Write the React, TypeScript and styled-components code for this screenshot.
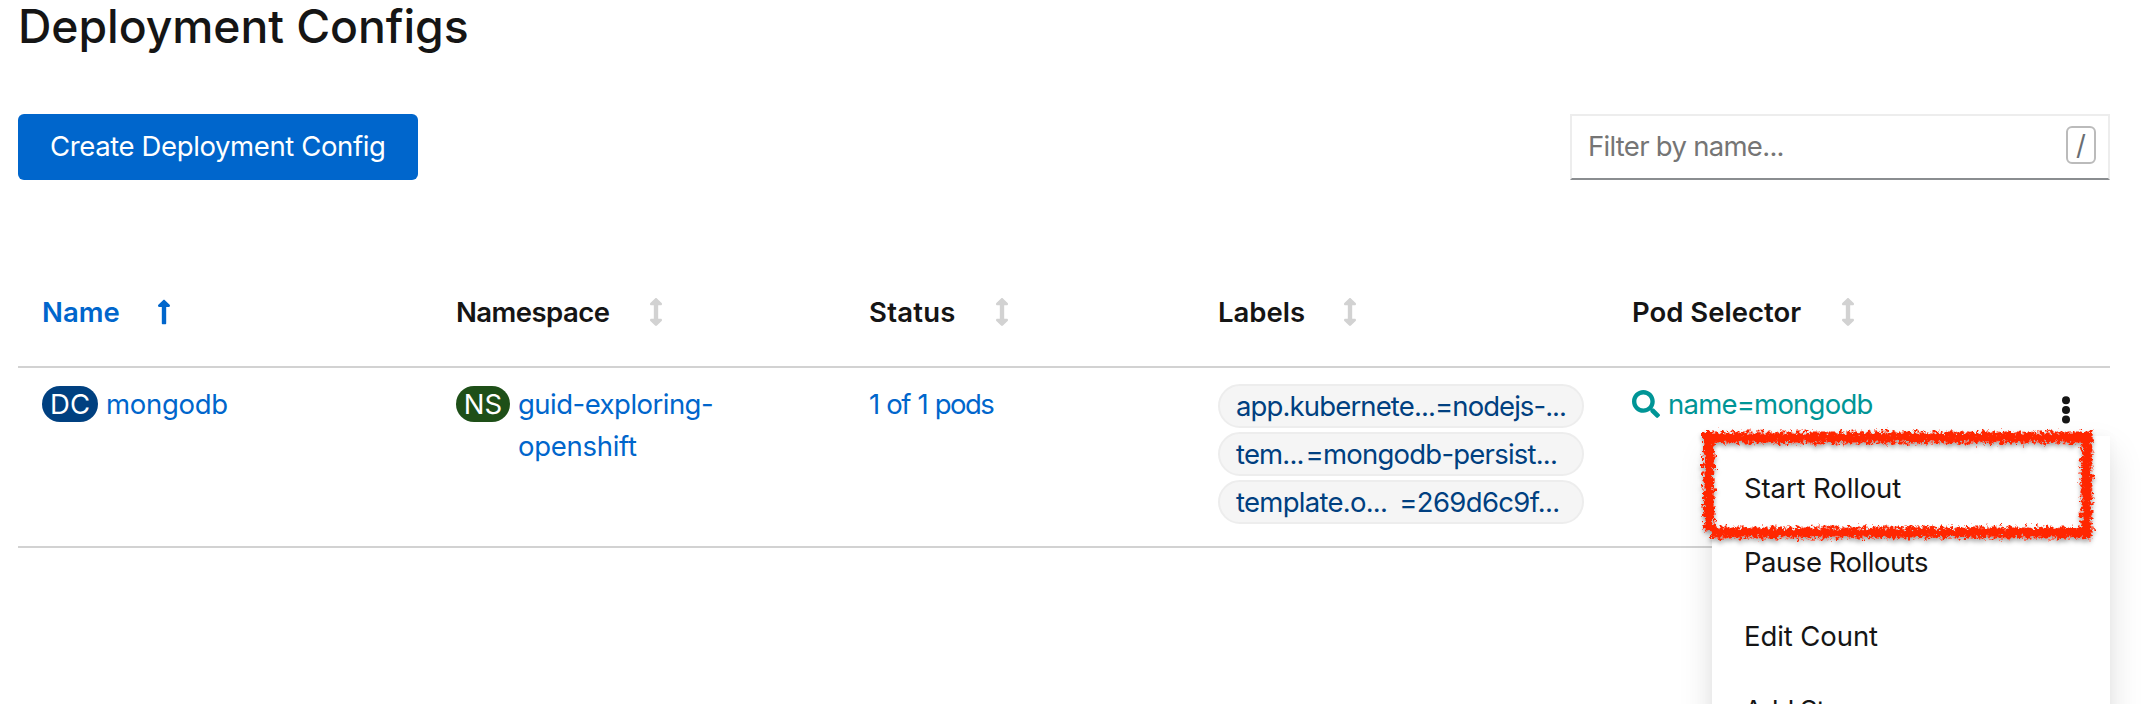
import React from "react";
import styled, { createGlobalStyle } from "styled-components";
import { FaArrowsAltV, FaLongArrowAltUp, FaSearch } from "react-icons/fa";

const GlobalStyle = createGlobalStyle`
  * { box-sizing: border-box; }
  body {
    margin: 0;
    background: #fff;
    color: #151515;
    font-family: Inter, "Liberation Sans", sans-serif;
    font-size: 27.5px;
    overflow: hidden;
  }
`;

const Page = styled.main`
  width: 2150px;
  height: 704px;
  padding: 0 40px 0 18px;
  overflow: hidden;
`;

const Title = styled.h1`
  margin: 0;
  height: 114px;
  font-size: 46.3px;
  font-weight: 500;
  line-height: 53px;
  letter-spacing: -0.06px;
`;

const Toolbar = styled.div`
  display: flex;
  justify-content: space-between;
  height: 66px;
`;

const Text = styled.span<{ $track?: number; $word?: number }>`
  letter-spacing: ${(p) => p.$track ?? 0}px;
  word-spacing: ${(p) => p.$word ?? 0}px;
  white-space: nowrap;
`;

const PrimaryButton = styled.button`
  width: 400px;
  height: 66px;
  padding: 0 0 2px 32px;
  border: 0;
  border-radius: 6px;
  background: #06c;
  color: #fff;
  font: inherit;
  text-align: left;
`;

const FilterBox = styled.div`
  display: flex;
  align-items: center;
  justify-content: space-between;
  width: 540px;
  height: 66px;
  padding: 0 12px 2px 16px;
  border: 2px solid #ededed;
  border-bottom-color: #8a8d90;
  color: #757575;
`;

const KeyHint = styled.kbd`
  display: flex;
  align-items: center;
  justify-content: center;
  width: 30px;
  height: 38px;
  margin-bottom: 2px;
  border: 2px solid #bbb;
  border-radius: 6px;
  color: #6a6e73;
  font: inherit;
`;

const Table = styled.div`
  position: relative;
  margin-top: 64px;
`;

const Row = styled.div`
  display: grid;
  grid-template-columns: 414px 413px 349px 414px 1fr;
  border-bottom: 2px solid #d2d2d2;
`;

const HeadRow = styled(Row)`
  height: 124px;
  padding-top: 47px;
`;

const BodyRow = styled(Row)`
  height: 180px;
`;

const HeadCell = styled.div<{ $active?: boolean; $gap: number }>`
  display: flex;
  align-items: center;
  gap: ${(p) => p.$gap}px;
  height: 42px;
  padding-left: 24px;
  color: ${(p) => (p.$active ? "#06c" : "#151515")};
  font-weight: 600;

  svg {
    width: 14px;
    height: 28px;
    color: ${(p) => (p.$active ? "#06c" : "#d2d2d2")};
  }
`;

const Cell = styled.div`
  display: flex;
  align-items: flex-start;
  padding: 15px 0 0 24px;
  line-height: 42px;
`;

const Badge = styled.span<{ $color: string; $width: number }>`
  flex: none;
  width: ${(p) => p.$width}px;
  height: 36px;
  margin: 3px 8px 0 0;
  border-radius: 18px;
  background: ${(p) => p.$color};
  color: #fff;
  line-height: 36px;
  text-align: center;
`;

const Link = styled.a`
  display: flex;
  flex-direction: column;
  color: #06c;
`;

const Labels = styled.div`
  display: flex;
  flex-direction: column;
  gap: 4px;
  padding: 16px 0 0 24px;
`;

const Label = styled.a<{ $gap: number }>`
  display: flex;
  gap: ${(p) => p.$gap}px;
  width: 366px;
  height: 44px;
  padding-left: 16px;
  border: 2px solid #ededed;
  border-radius: 22px;
  background: #f5f5f5;
  color: #004080;
  line-height: 40px;
`;

const SelectorCell = styled(Cell)`
  gap: 8px;
  color: #009596;

  > svg {
    width: 28px;
    height: 28px;
    margin-top: 7px;
  }
`;

const Kebab = styled.button`
  width: 8px;
  height: 28px;
  margin: 13px 40px 0 auto;
  padding: 0;
  border: 0;
  background: none;
  color: #151515;

  svg { display: block; }
`;

const Menu = styled.div`
  position: absolute;
  top: 192px;
  right: 0;
  display: flex;
  flex-direction: column;
  width: 398px;
  height: 420px;
  padding-top: 15px;
  background: #fff;
  box-shadow: 0 16px 32px rgba(3, 3, 3, 0.13), 0 0 12px rgba(3, 3, 3, 0.03);
`;

const MenuItem = styled.div`
  height: 74px;
  padding-left: 32px;
  line-height: 74px;
`;

const Highlight = styled.svg`
  position: absolute;
  top: -20px;
  left: -26px;
  pointer-events: none;
`;

const menuItems: [string, number][] = [
  ["Start Rollout", -0.11],
  ["Pause Rollouts", -0.47],
  ["Edit Count", -0.09],
  ["Add Storage", -1.1],
];

const labels: [string, number, string, number, number][] = [
  ["app.kubernete...", -0.86, "=nodejs-...", -0.95, 0],
  ["tem...", -0.84, "=mongodb-persist...", -0.78, 2],
  ["template.o...", -0.73, "=269d6c9f...", -0.65, 12],
];

/* Chalk-like red frame drawn round the first menu entry. */
function ChalkFrame() {
  return (
    <Highlight width="430" height="150" viewBox="1686 416 430 150">
      <defs>
        <filter id="chalk" filterUnits="userSpaceOnUse" x="1686" y="416" width="430" height="150">
          <feTurbulence type="fractalNoise" baseFrequency="0.28" numOctaves="3" seed="7" result="noise" />
          <feDisplacementMap in="SourceGraphic" in2="noise" scale="11" xChannelSelector="R" yChannelSelector="G" result="rough" />
          <feDropShadow in="rough" dx="0" dy="3" stdDeviation="2" floodColor="#000" floodOpacity="0.35" />
        </filter>
      </defs>
      <g filter="url(#chalk)" fill="none" stroke="#ff2600">
        <g strokeWidth="8.500">
          <path d="M1704 437.500H2092" />
          <path d="M2086.500 433V537" />
          <path d="M1712 532.500H2092" />
          <path d="M1709 433V530" />
        </g>
        <g strokeWidth="12" strokeDasharray="3 1.500 1 2 5 1 2 1.500">
          <path d="M1703 437.500H2093" />
          <path d="M2086.500 432V538" />
          <path d="M1711 532.500H2093" />
          <path d="M1709 432V531" />
        </g>
      </g>
    </Highlight>
  );
}

export default function App() {
  return (
    <Page>
      <GlobalStyle />
      <Title>Deployment Configs</Title>
      <Toolbar>
        <PrimaryButton><Text $track={-0.38}>Create Deployment Config</Text></PrimaryButton>
        <FilterBox>
          <Text $track={-0.71}>Filter by name...</Text>
          <KeyHint>/</KeyHint>
        </FilterBox>
      </Toolbar>
      <Table>
        <HeadRow>
          <HeadCell $active $gap={37}><Text>Name</Text><FaLongArrowAltUp /></HeadCell>
          <HeadCell $gap={40}><Text $track={-0.54}>Namespace</Text><FaArrowsAltV /></HeadCell>
          <HeadCell $gap={39}><Text $track={0.25}>Status</Text><FaArrowsAltV /></HeadCell>
          <HeadCell $gap={38}><Text>Labels</Text><FaArrowsAltV /></HeadCell>
          <HeadCell $gap={40}><Text>Pod Selector</Text><FaArrowsAltV /></HeadCell>
        </HeadRow>
        <BodyRow>
          <Cell>
            <Badge $color="#004080" $width={56}><Text>DC</Text></Badge>
            <Link><Text $track={-0.3}>mongodb</Text></Link>
          </Cell>
          <Cell>
            <Badge $color="#1e4f18" $width={54}><Text>NS</Text></Badge>
            <Link>
              <Text $track={-0.52}>guid-exploring-</Text>
              <Text $track={-0.29}>openshift</Text>
            </Link>
          </Cell>
          <Cell><Link><Text $track={-1.6} $word={1.6}>1 of 1 pods</Text></Link></Cell>
          <Labels>
            {labels.map(([key, keyTrack, value, valueTrack, gap]) => (
              <Label key={key} $gap={gap}>
                <Text $track={keyTrack}>{key}</Text>
                <Text $track={valueTrack}>{value}</Text>
              </Label>
            ))}
          </Labels>
          <SelectorCell>
            <FaSearch />
            <Text $track={-0.78}>name=mongodb</Text>
            <Kebab aria-label="Actions">
              <svg width="8" height="28" viewBox="0 0 8 28" fill="currentColor">
                <circle cx="4" cy="4.300" r="4" />
                <circle cx="4" cy="14" r="4" />
                <circle cx="4" cy="23.600" r="4" />
              </svg>
            </Kebab>
          </SelectorCell>
        </BodyRow>
        <Menu>
          {menuItems.map(([name, track]) => (
            <MenuItem key={name}><Text $track={track}>{name}</Text></MenuItem>
          ))}
          <ChalkFrame />
        </Menu>
      </Table>
    </Page>
  );
}
